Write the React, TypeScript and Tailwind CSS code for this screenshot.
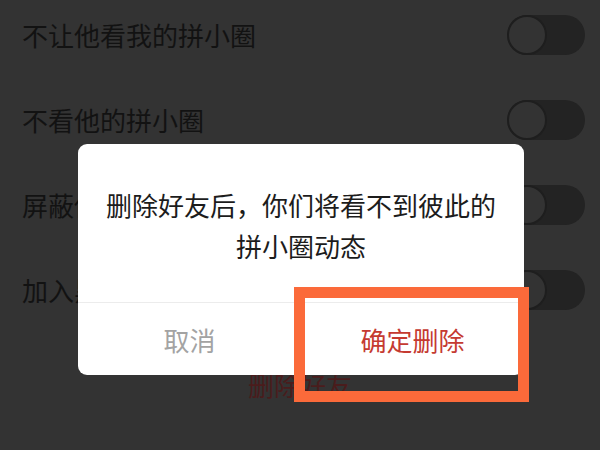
import React from 'react';

const rows = ['不让他看我的拼小圈', '不看他的拼小圈', '屏蔽他的拼小圈', '加入黑名单'];

const Toggle: React.FC = () => (
  <div className="relative h-[40px] w-[78px] rounded-full bg-[#232323]">
    <div className="absolute left-0 top-0 h-[40px] w-[40px] rounded-full border-2 border-[#1e1e1e] bg-[#333333]" />
  </div>
);

export default function App() {
  return (
    <div
      className="relative h-[450px] w-[600px] overflow-hidden bg-[#333333]"
      style={{ fontFamily: '"Noto Sans CJK SC", "Noto Sans", sans-serif' }}
    >
      {/* settings list behind the dimmed overlay */}
      <div className="-mt-2 flex flex-col">
        {rows.map((label) => (
          <div key={label} className="flex h-[85px] items-center justify-between pl-[22px] pr-[15px]">
            <span className="text-[26px] leading-[30px] text-[#121212]">{label}</span>
            <Toggle />
          </div>
        ))}
        <div className="mt-[40px] text-center text-[26px] leading-[26px] text-[#4a1c1c]">删除好友</div>
      </div>

      {/* confirm dialog */}
      <div className="absolute left-[78px] top-[144px] flex h-[231px] w-[446px] flex-col overflow-hidden rounded-[9px] bg-white">
        <div className="h-[158px] pt-[40px] text-center text-[26px] leading-[41px] text-[#1c1c1c]">
          删除好友后，你们将看不到彼此的
          <br />
          拼小圈动态
        </div>
        <div className="flex flex-1 border-t border-[#ececec]">
          <button className="flex flex-1 items-center justify-center text-[26px] text-[#a3a3a3]">取消</button>
          <button className="flex flex-1 items-center justify-center text-[26px] text-[#c53a31]">确定删除</button>
        </div>
      </div>

      {/* highlight frame */}
      <div className="absolute left-[294px] top-[287px] h-[115px] w-[235px] border-[11px] border-[#fb6a3a]" />
    </div>
  );
}
